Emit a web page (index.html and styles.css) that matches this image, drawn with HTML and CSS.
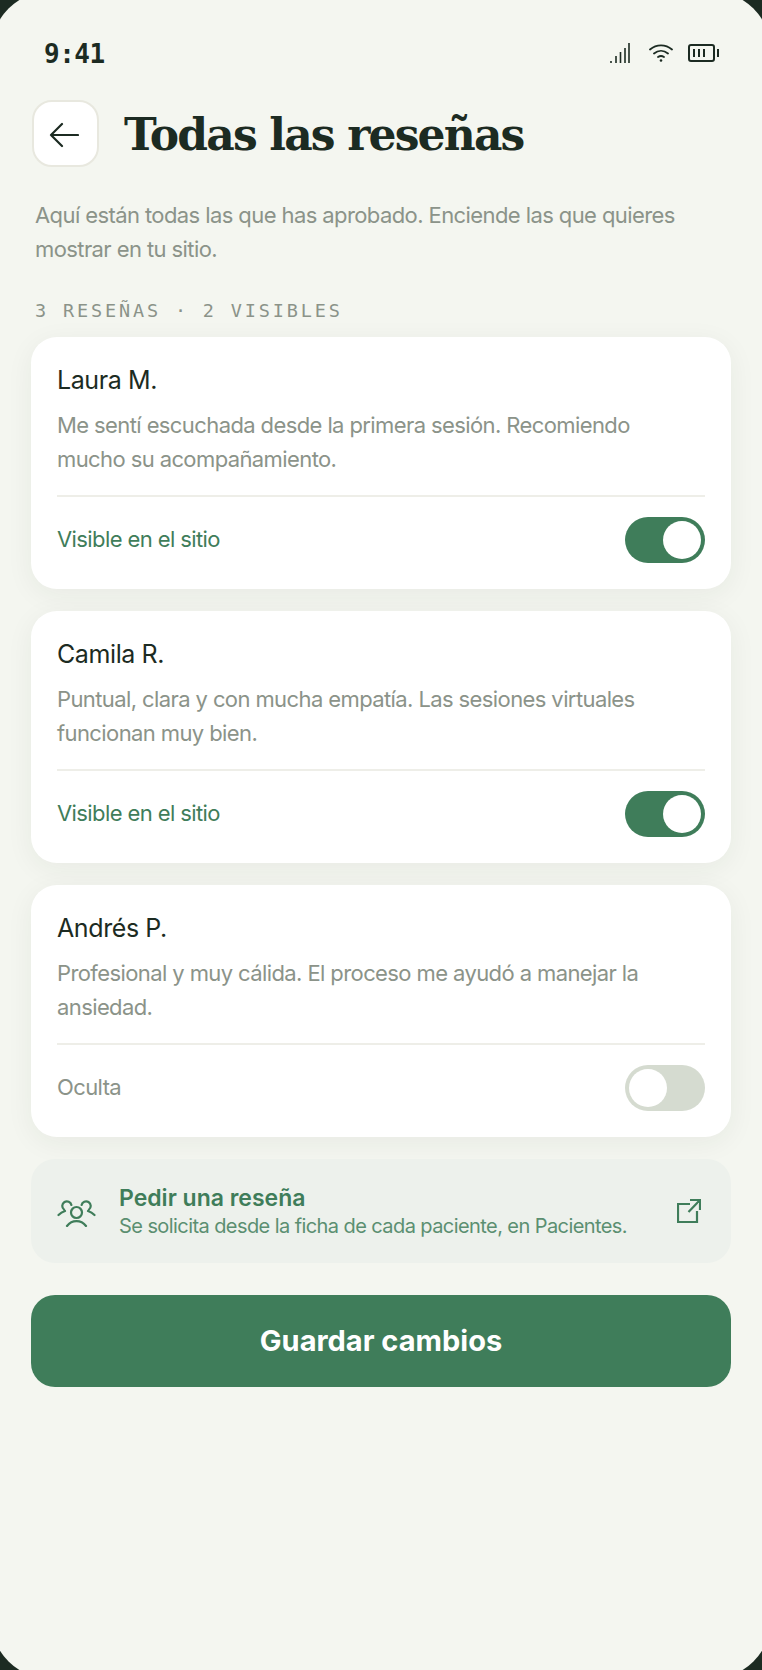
FILE: index.html
```html
<!DOCTYPE html>
<html>
    <head>
        <title>Todas las reseñas</title>
        <link rel="stylesheet" href="styles.css">
    </head>
    <body>
        <div class="phone">
            <div class="status_bar">
                <span class="time">9:41</span>
                <div class="status_icons">
                    <svg class="signal" width="20" height="20" viewBox="0 0 20 20" fill="none" stroke="#1c2b22" stroke-width="1.600">
                        <path d="M1 20v-2M6 20v-7M10.500 20V9M15 20V5M19 20V0"/>
                    </svg>
                    <svg class="wifi" width="24" height="18" viewBox="0 0 24 18" fill="none" stroke="#1c2b22" stroke-width="1.800" stroke-linecap="round">
                        <path d="M1 5.500c6.500-5.500 15.500-5.500 22 0M5 9.500c4.300-3.500 9.700-3.500 14 0M9 13c2-1.300 4-1.300 6 0"/>
                        <circle cx="12" cy="16.500" r="1.300" fill="#1c2b22" stroke="none"/>
                    </svg>
                    <svg class="battery" width="31" height="18" viewBox="0 0 31 18" fill="none" stroke="#1c2b22" stroke-width="2">
                        <rect x="1" y="1" width="25" height="16" rx="2"/>
                        <path d="M6 5v8M11 5v8M16 5v8"/>
                        <path d="M30 5v8"/>
                    </svg>
                </div>
            </div>
            <div class="header">
                <div class="back_btn">
                    <svg width="30" height="26" viewBox="0 0 30 26" fill="none" stroke="#1c2b22" stroke-width="2.200" stroke-linecap="round" stroke-linejoin="round">
                        <path d="M29 13H2M13 2 2 13l11 11"/>
                    </svg>
                </div>
                <h1>Todas las reseñas</h1>
            </div>
            <p class="intro">Aquí están todas las que has aprobado. Enciende las que quieres mostrar en tu sitio.</p>
            <div class="count">3 RESEÑAS · 2 VISIBLES</div>

            <div class="card">
                <div class="name">Laura M.</div>
                <p class="quote">Me sentí escuchada desde la primera sesión. Recomiendo mucho su acompañamiento.</p>
                <div class="card_foot">
                    <span class="state on">Visible en el sitio</span>
                    <span class="toggle on"><span class="knob"></span></span>
                </div>
            </div>
            <div class="card">
                <div class="name">Camila R.</div>
                <p class="quote">Puntual, clara y con mucha empatía. Las sesiones virtuales funcionan muy bien.</p>
                <div class="card_foot">
                    <span class="state on">Visible en el sitio</span>
                    <span class="toggle on"><span class="knob"></span></span>
                </div>
            </div>
            <div class="card">
                <div class="name">Andrés P.</div>
                <p class="quote">Profesional y muy cálida. El proceso me ayudó a manejar la ansiedad.</p>
                <div class="card_foot">
                    <span class="state">Oculta</span>
                    <span class="toggle"><span class="knob"></span></span>
                </div>
            </div>

            <div class="note">
                <svg class="people" width="39" height="28" viewBox="0 0 39 28" fill="none" stroke="#3f7d5a" stroke-width="2.200" stroke-linecap="round">
                    <circle cx="19.500" cy="13.500" r="5.500"/>
                    <path d="M10 27c5-6.500 14-6.500 19 0"/>
                    <path d="M7 10.500A4.600 4.600 0 1 1 14.400 6M1.500 16c1.500-1.500 3.500-3 6.500-4"/>
                    <path d="M32 10.500A4.600 4.600 0 1 0 24.600 6M37.500 16c-1.500-1.500-3.500-3-6.500-4"/>
                </svg>
                <div class="note_text">
                    <div class="note_title">Pedir una reseña</div>
                    <div class="note_sub">Se solicita desde la ficha de cada paciente, en Pacientes.</div>
                </div>
                <svg class="ext" width="24" height="24" viewBox="0 0 24 24" fill="none" stroke="#3f7d5a" stroke-width="2.200">
                    <path d="M13 5H1v18h19V12"/>
                    <path d="M11.500 13 22.500 1.500M13 1h10v10"/>
                </svg>
            </div>

            <div class="save_btn">Guardar cambios</div>
        </div>
    </body>
</html>
```
FILE: styles.css
```css
html, body {
	margin: 0;
	height: 1670px;
	overflow: hidden;
	background: #1c2b22;
}
.phone {
	margin: -9px;
	width: 780px;
	height: 1688px;
	box-sizing: border-box;
	padding: 9px 40px 0 40px;
	background: #f4f6f0;
	border-radius: 60px;
	font-family: "Inter", sans-serif;
	color: #1c2b22;
}
.status_bar {
	box-sizing: border-box;
	display: flex;
	justify-content: space-between;
	align-items: center;
	height: 100px;
	padding: 6px 12px 0 13px;
}
.time {
	margin-top: 1px;
	font-family: "DejaVu Sans Mono", monospace;
	font-size: 26px;
	font-weight: bold;
	letter-spacing: -0.500px;
}
.status_icons {
	display: flex;
	align-items: center;
}
.signal {
	margin-right: 19px;
}
.wifi {
	margin-right: 15px;
}
.header {
	display: flex;
	align-items: center;
	gap: 25px;
	height: 66px;
}
.back_btn {
	box-sizing: border-box;
	width: 67px;
	height: 67px;
	margin-left: 1px;
	padding: 4px 3px 0 0;
	display: flex;
	align-items: center;
	justify-content: center;
	background: #fff;
	border: 2px solid #e8e8df;
	border-radius: 20px;
}
h1 {
	margin: 2px 0 0 0;
	font-family: "DejaVu Serif", serif;
	font-size: 44px;
	font-weight: bold;
	letter-spacing: -1.850px;
	color: #1c2b22;
}
.intro {
	margin: 32px 0 0 4px;
	font-size: 22px;
	line-height: 34px;
	letter-spacing: -0.590px;
	color: #8b9389;
}
.count {
	margin: 35px 0 0 4px;
	height: 36px;
	font-family: "DejaVu Sans Mono", monospace;
	font-size: 18.500px;
	line-height: 20px;
	letter-spacing: 2.850px;
	color: #8b9389;
}
.card {
	box-sizing: border-box;
	height: 252px;
	margin-bottom: 22px;
	padding: 28px 26px 0 26px;
	background: #fff;
	border-radius: 26px;
	box-shadow: 0 6px 28px rgba(28, 43, 34, 0.06);
}
.name {
	font-size: 25px;
	line-height: 30px;
	letter-spacing: -0.400px;
}
.quote {
	margin: 13px 0 0 0;
	padding-right: 12px;
	font-size: 22px;
	line-height: 34px;
	letter-spacing: -0.600px;
	color: #8b9389;
}
.card_foot {
	display: flex;
	justify-content: space-between;
	align-items: center;
	margin-top: 19px;
	padding-top: 20px;
	border-top: 2px solid #eeeee8;
}
.state {
	margin-bottom: 2px;
	font-size: 22px;
	letter-spacing: -0.600px;
	color: #8b9389;
}
.state.on {
	color: #3f7d5a;
}
.toggle {
	box-sizing: border-box;
	width: 80px;
	height: 46px;
	padding: 4px;
	display: flex;
	background: #d5dbd0;
	border-radius: 23px;
}
.toggle.on {
	background: #3f7d5a;
	justify-content: flex-end;
}
.knob {
	width: 38px;
	height: 38px;
	background: #fff;
	border-radius: 50%;
}
.note {
	box-sizing: border-box;
	display: flex;
	align-items: center;
	height: 104px;
	padding: 0 30px 0 26px;
	background: #edf1ec;
	border-radius: 24px;
}
.people {
	margin: 4px 23px 0 0;
}
.note_text {
	flex: 1;
}
.note_title {
	font-size: 23px;
	font-weight: 600;
	line-height: 30px;
	color: #3f7d5a;
}
.note_sub {
	font-size: 20px;
	line-height: 26px;
	letter-spacing: -0.580px;
	color: #5b8f71;
}
.save_btn {
	box-sizing: border-box;
	margin-top: 32px;
	height: 92px;
	padding-bottom: 2px;
	display: flex;
	align-items: center;
	justify-content: center;
	background: #3f7d5a;
	border-radius: 24px;
	color: #fff;
	font-size: 29px;
	font-weight: 700;
}
```
